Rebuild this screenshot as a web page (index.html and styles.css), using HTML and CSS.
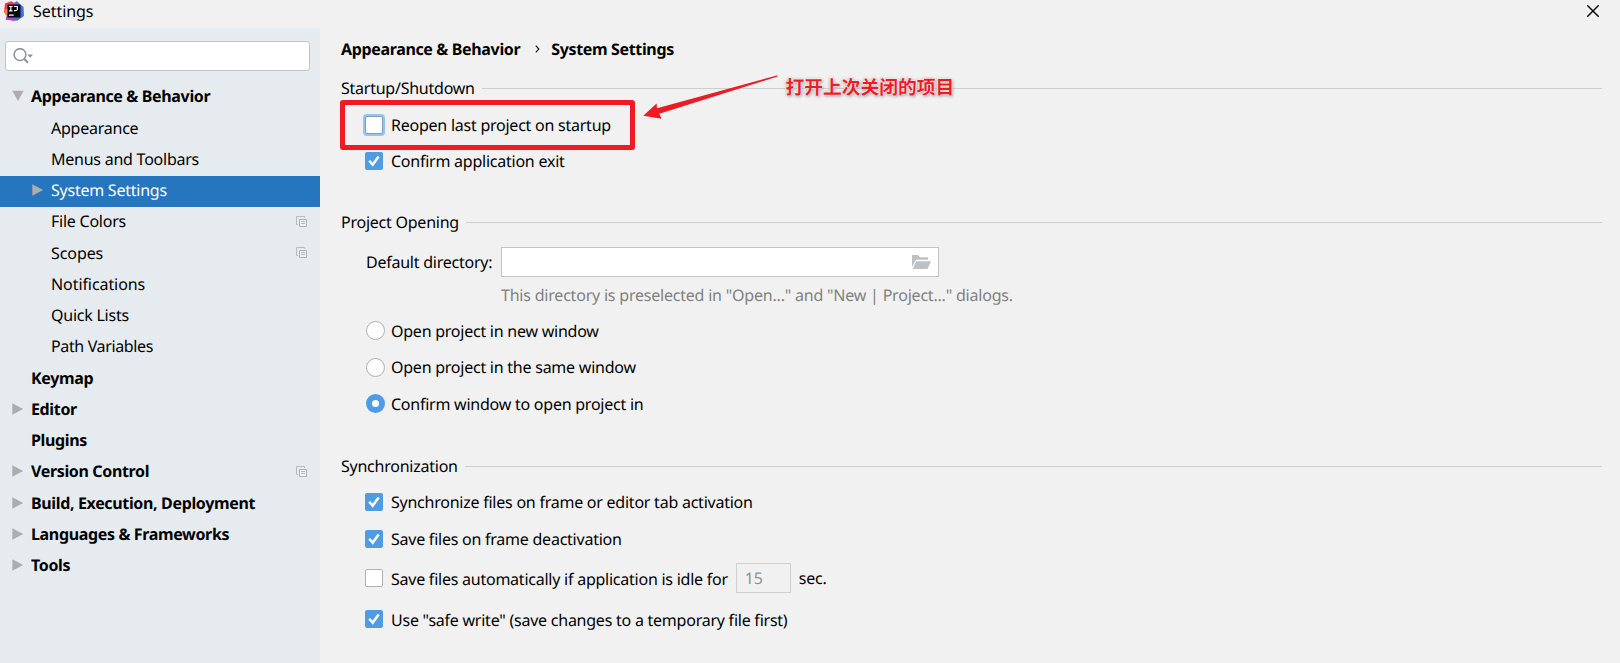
FILE: index.html
```html
<!DOCTYPE html>
<html lang="en">
<head>
<meta charset="utf-8">
<title>Settings</title>
<link rel="stylesheet" href="styles.css">
</head>
<body>
<svg class="defs" width="0" height="0" aria-hidden="true">
  <symbol id="right" viewBox="0 0 12 12"><path d="M.3 .3 11.2 6 .3 11.7Z" fill="#adadad"/></symbol>
  <symbol id="down" viewBox="0 0 12 12"><path d="M.3 .8H11.7L6 11Z" fill="#adadad"/></symbol>
  <symbol id="copy" viewBox="0 0 11 11"><path d="M2 8.5H.5V.5H8.5V2" fill="none" stroke="#b5bdc3"/><path d="M3.5 3.5H10.5V10.5H3.5Z" fill="#edf1f4" stroke="#aab3ba"/><path d="M5 5.5H9M5 7.5H9" stroke="#b5bdc3"/></symbol>
  <symbol id="check" viewBox="0 0 18 18"><path d="M4.2 8.7 7.7 12.7 13.6 4.6" fill="none" stroke="#fff" stroke-width="2.5"/></symbol>
</svg>
<header class="titlebar">
  <svg class="logo" viewBox="0 0 20 20">
    <path d="M1 2.5 7 .3 11 3 8 18 1.5 19 3 15 0 11Z" fill="#f7364f"/>
    <path d="M0 9 5 7V13L2 14Z" fill="#fc801d"/>
    <path d="M3 13 9 14 14 19 10 20 2 18.5Z" fill="#b63fd2"/>
    <path d="M8 3 13 .3 17 4 19.5 6 20 15 13 19.7 8 16Z" fill="#3b70e8"/>
    <path d="M7 .3 10 2 13 .3 11 4H5Z" fill="#ed3b7e"/>
    <path d="M3.5 3.5H16.5V16.5H3.5Z" fill="#080808"/>
    <path d="M5 5.5H8.5M6.8 5.5V9.8M5 9.8H8.5M10 5.5H13.3V8.7Q13 10 10 9.6M5 14.2H9.7" fill="none" stroke="#fff" stroke-width="1.2"/>
  </svg>
  <span class="title">Settings</span>
  <svg class="close" viewBox="0 0 12 12"><path d="M.3 .3 11.7 11.7M11.7 .3.3 11.7" stroke="#000" stroke-width="1.4"/></svg>
</header>
<div class="body">
  <aside class="sidebar">
    <div class="search">
      <svg viewBox="0 0 21 16"><circle cx="7" cy="6.6" r="5.9" fill="none" stroke="#87929c" stroke-width="1.5"/><path d="M11 10.7 15 14.7" stroke="#87929c" stroke-width="2"/><path d="M14.3 6.5H20L17.2 9.8Z" fill="#87929c"/></svg>
    </div>
    <nav class="tree">
      <div class="node top"><svg class="tri"><use href="#down"/></svg><span>Appearance &amp; Behavior</span></div>
      <div class="node"><span>Appearance</span></div>
      <div class="node"><span>Menus and Toolbars</span></div>
      <div class="node selected"><svg class="tri"><use href="#right"/></svg><span>System Settings</span></div>
      <div class="node"><span>File Colors</span><svg class="copy"><use href="#copy"/></svg></div>
      <div class="node loose"><span>Scopes</span><svg class="copy"><use href="#copy"/></svg></div>
      <div class="node loose"><span>Notifications</span></div>
      <div class="node"><span>Quick Lists</span></div>
      <div class="node tight"><span>Path Variables</span></div>
      <div class="node top leaf"><span>Keymap</span></div>
      <div class="node top"><svg class="tri"><use href="#right"/></svg><span>Editor</span></div>
      <div class="node top leaf"><span>Plugins</span></div>
      <div class="node top"><svg class="tri"><use href="#right"/></svg><span>Version Control</span><svg class="copy"><use href="#copy"/></svg></div>
      <div class="node top"><svg class="tri"><use href="#right"/></svg><span>Build, Execution, Deployment</span></div>
      <div class="node top"><svg class="tri"><use href="#right"/></svg><span>Languages &amp; Frameworks</span></div>
      <div class="node top"><svg class="tri"><use href="#right"/></svg><span>Tools</span></div>
    </nav>
  </aside>
  <main class="content">
    <div class="crumbs"><span>Appearance &amp; Behavior</span><svg viewBox="0 0 5 8"><path d="M.8 .6 3.8 4 .8 7.4" fill="none" stroke="#222" stroke-width="1.3"/></svg><span>System Settings</span></div>
    <section class="startup">
      <h2>Startup/Shutdown</h2>
      <div class="option"><i class="box focused"></i><span>Reopen last project on startup</span></div>
      <div class="option"><i class="box on"><svg><use href="#check"/></svg></i><span>Confirm application exit</span></div>
    </section>
    <section class="opening">
      <h2>Project Opening</h2>
      <div class="directory"><span>Default directory:</span>
        <div class="field"><svg viewBox="0 0 19 14"><path d="M0 12V0H6L8 2.3H16V4.8H4Z" fill="#bcc1c5"/><path d="M4 6.2H19L15.5 14H.7Z" fill="#bcc1c5"/></svg></div>
      </div>
      <p class="hint">This directory is preselected in "Open..." and "New | Project..." dialogs.</p>
      <div class="option radio-row"><i class="radio"></i><span>Open project in new window</span></div>
      <div class="option radio-row"><i class="radio"></i><span>Open project in the same window</span></div>
      <div class="option radio-row"><i class="radio on"></i><span>Confirm window to open project in</span></div>
    </section>
    <section class="sync">
      <h2>Synchronization</h2>
      <div class="option"><i class="box on"><svg><use href="#check"/></svg></i><span>Synchronize files on frame or editor tab activation</span></div>
      <div class="option second"><i class="box on"><svg><use href="#check"/></svg></i><span>Save files on frame deactivation</span></div>
      <div class="option idle"><i class="box"></i><span class="low">Save files automatically if application is idle for</span><div class="seconds">15</div><span class="unit">sec.</span></div>
      <div class="option last"><i class="box on"><svg><use href="#check"/></svg></i><span class="low">Use "safe write" (save changes to a temporary file first)</span></div>
    </section>
  </main>
</div>
<div class="callout"></div>
<svg class="arrow" viewBox="0 0 136 46"><path d="M134.5 .3 14 33.3 13.6 28.5 .3 40.7 18.5 43.8 16.3 38.8 134.5 1.5Z" fill="#ed1c24"/></svg>
<div class="note">打开上次关闭的项目</div>
</body>
</html>
```
FILE: styles.css
```css
* { box-sizing: border-box; }
body {
  margin: 0;
  width: 1620px;
  height: 663px;
  overflow: hidden;
  position: relative;
  background: #f1f1f1;
  color: #000;
  font: 16px/20px "Noto Sans", "Noto Sans CJK SC", sans-serif;
  letter-spacing: -0.24px;
  text-rendering: geometricPrecision;
  white-space: nowrap;
}
.defs { position: absolute; }
svg { display: block; flex: none; }
.titlebar { height: 28px; display: flex; align-items: center; padding: 0 21px 6px 4px; }
.logo { width: 20px; height: 20px; }
.title { margin-left: 9px; letter-spacing: -0.05px; }
.close { width: 12px; height: 12px; margin-left: auto; }
.body { display: flex; height: 635px; }
.sidebar { width: 320px; flex: none; background: #e6ebef; padding-top: 13px; }
.search {
  width: 305px; height: 30px; margin-left: 5px; padding-left: 7px;
  display: flex; align-items: center;
  background: #fff; border: 1px solid #c1c3c5; border-radius: 3px;
}
.search svg { width: 21px; height: 16px; }
.tree { margin-top: 11.25px; }
.node { height: 31.25px; display: flex; align-items: center; padding: 0 13px 3px 51px; }
.node.top { padding-left: 12px; font-weight: 700; letter-spacing: -0.35px; }
.node.leaf { padding-left: 31px; }
.node.selected { padding-left: 32px; background: #2675bf; color: #fff; }
.node.loose { letter-spacing: -0.08px; }
.node.tight { letter-spacing: -0.36px; }
.tri { width: 12px; height: 12px; margin-right: 7px; }
.copy { width: 11px; height: 11px; margin-left: auto; }
.content { flex: 1; padding: 0 18px 0 21px; }
.crumbs { height: 43px; display: flex; align-items: center; padding-bottom: 1px; font-weight: 700; letter-spacing: -0.35px; }
.crumbs svg { width: 5px; height: 8px; margin: 0 11px 0 15px; }
h2 { margin: 0; height: 32px; display: flex; align-items: center; font-size: 16px; font-weight: 400; }
h2::after { content: ""; height: 1px; flex: 1; margin-left: 7px; background: #cdcdcd; }
.startup { height: 135px; padding-top: 1px; }
.startup h2 { margin-bottom: 3px; }
.option { height: 36px; display: flex; align-items: center; padding-left: 24px; }
.box {
  width: 18px; height: 18px; margin-right: 8px; flex: none;
  background: #fff; border: 1px solid #b0b0b0; border-radius: 2px;
}
.box.on { background: #4e9de4; border: 0; }
.box svg { width: 18px; height: 18px; }
.box.focused { border-color: #7e9fc4; box-shadow: 0 0 0 2px #97c3f3; }
.opening { height: 244px; }
.directory { margin-top: 9px; height: 30px; padding-left: 25px; display: flex; align-items: center; }
.directory span { width: 135px; }
.field { width: 438px; height: 30px; background: #fff; border: 1px solid #c4c4c4; display: flex; align-items: center; justify-content: flex-end; padding-right: 7px; }
.field svg { width: 19px; height: 14px; }
.hint { margin: 0; padding-left: 160px; height: 35.5px; line-height: 37px; color: #808080; letter-spacing: -0.21px; }
.radio-row { height: 36.5px; padding-left: 25px; }
.radio { width: 19px; height: 19px; margin-right: 6px; border: 1px solid #b0b0b0; border-radius: 50%; background: #fff; flex: none; }
.radio.on { border: 6px solid #4e9de4; }
.sync h2 { margin-bottom: 2px; }
.second { height: 38px; }
.idle { height: 40px; }
.last { height: 41px; }
.low { padding-top: 2px; }
.seconds { width: 55px; height: 30px; margin-left: 8px; padding-left: 8px; line-height: 28px; border: 1px solid #cfcfcf; color: #919191; }
.unit { margin-left: 8px; }
.callout { position: absolute; left: 340px; top: 100px; width: 295px; height: 50px; border: 5px solid #ed1c24; border-radius: 3px; }
.arrow { position: absolute; left: 643px; top: 75px; width: 136px; height: 46px; }
.note {
  position: absolute; left: 785.5px; top: 75px; line-height: 24px; letter-spacing: 0;
  font-family: "Noto Sans CJK SC", sans-serif; font-size: 18.75px; font-weight: 700; color: #ed1c24;
  text-shadow: 0 0 1px #fff, 0 0 2px #fff, 0 0 2px #fff, 1px 1px 3px #888, -1px 0 3px #aaa;
}
```
